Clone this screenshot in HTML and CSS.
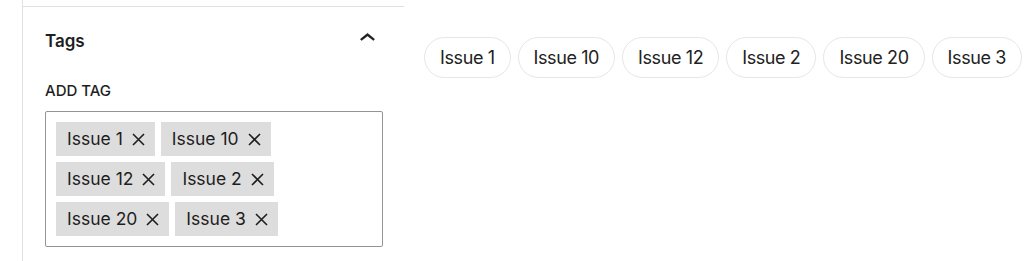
FILE: index.html
```html
<!DOCTYPE html>
<html lang="en">
<head>
    <meta charset="UTF-8">
    <meta name="viewport" content="width=device-width, initial-scale=1.0">
    <title>Tags</title>
    <link rel="stylesheet" href="styles.css">
</head>
<body>
    <div class="sidebar">
        <div class="panel">
            <div class="panel-header">
                <h2>Tags</h2>
                <svg class="chevron" viewBox="0 0 24 24" width="31" height="31" aria-hidden="true">
                    <path d="M6.5 12.4L12 8l5.5 4.4-.9 1.2L12 10l-4.6 3.6-1-1.2z"></path>
                </svg>
            </div>

            <label class="field-label">Add tag</label>
            <div class="token-field">
                <span class="token">Issue 1<svg class="remove" viewBox="0 0 13 13"><path d="M1 1l11 11M12 1L1 12"></path></svg></span>
                <span class="token">Issue 10<svg class="remove" viewBox="0 0 13 13"><path d="M1 1l11 11M12 1L1 12"></path></svg></span>
                <span class="token">Issue 12<svg class="remove" viewBox="0 0 13 13"><path d="M1 1l11 11M12 1L1 12"></path></svg></span>
                <span class="token">Issue 2<svg class="remove" viewBox="0 0 13 13"><path d="M1 1l11 11M12 1L1 12"></path></svg></span>
                <span class="token">Issue 20<svg class="remove" viewBox="0 0 13 13"><path d="M1 1l11 11M12 1L1 12"></path></svg></span>
                <span class="token">Issue 3<svg class="remove" viewBox="0 0 13 13"><path d="M1 1l11 11M12 1L1 12"></path></svg></span>
            </div>
        </div>
    </div>

    <div class="tag-cloud">
        <a href="#" class="tag-pill">Issue 1</a>
        <a href="#" class="tag-pill">Issue 10</a>
        <a href="#" class="tag-pill">Issue 12</a>
        <a href="#" class="tag-pill">Issue 2</a>
        <a href="#" class="tag-pill">Issue 20</a>
        <a href="#" class="tag-pill">Issue 3</a>
    </div>
</body>
</html>
```

FILE: styles.css
```css
* {
    margin: 0;
    padding: 0;
    box-sizing: border-box;
}

body {
    display: flex;
    align-items: flex-start;
    height: 261px;
    overflow: hidden;
    background: #fff;
    color: #1e1e1e;
    font-family: Inter, "Liberation Sans", sans-serif;
}

.sidebar {
    margin-left: 22px;
    width: 382px;
    height: 261px;
    border-left: 1px solid #e0e0e0;
    flex-shrink: 0;
}

.panel {
    margin-top: 6px;
    border-top: 1px solid #e0e0e0;
    padding: 18px 21px 0 22px;
}

.panel-header {
    display: flex;
    align-items: center;
    justify-content: space-between;
    height: 32px;
}

.panel-header h2 {
    font-size: 17px;
    font-weight: 600;
    line-height: 32px;
}

.chevron {
    fill: #1e1e1e;
    stroke: #1e1e1e;
    stroke-width: 0.3;
    margin-top: -5px;
}

.field-label {
    display: block;
    margin-top: 26px;
    margin-bottom: 12px;
    font-size: 15px;
    font-weight: 500;
    line-height: 16px;
    text-transform: uppercase;
}

.token-field {
    display: flex;
    flex-wrap: wrap;
    gap: 6px;
    width: 338px;
    padding: 10px;
    border: 1px solid #949494;
    border-radius: 2px;
}

.token {
    display: flex;
    align-items: center;
    height: 34px;
    padding: 0 10px 0 11px;
    background: #ddd;
    font-size: 17.5px;
    line-height: 1;
}

.remove {
    width: 13px;
    height: 13px;
    margin-left: 9px;
    fill: none;
    stroke: #1e1e1e;
    stroke-width: 1.6;
}

.tag-cloud {
    display: flex;
    gap: 7px;
    padding: 37px 0 0 20px;
}

.tag-pill {
    display: flex;
    align-items: center;
    height: 41px;
    padding: 0 15px;
    border: 1px solid #e6e6e6;
    border-radius: 21px;
    color: #222;
    text-decoration: none;
    font-size: 18px;
    letter-spacing: -0.4px;
    white-space: nowrap;
}
```
